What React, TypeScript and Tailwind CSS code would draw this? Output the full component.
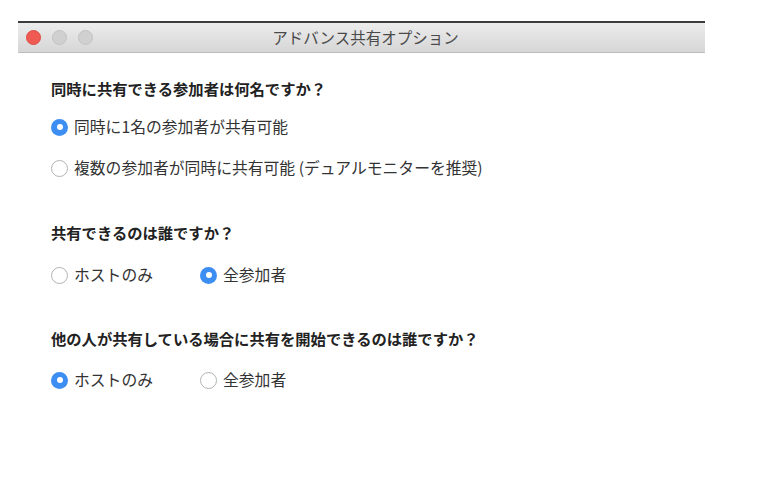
import React from "react";

const font = { fontFamily: '"Noto Sans CJK JP", "Noto Sans", sans-serif' };

function Radio({ checked }: { checked: boolean }) {
  return checked ? (
    <span className="flex h-[17px] w-[17px] shrink-0 items-center justify-center rounded-full bg-[#3d8ef2]">
      <span className="h-[6px] w-[6px] rounded-full bg-white" />
    </span>
  ) : (
    <span className="h-[17px] w-[17px] shrink-0 rounded-full border-[1.5px] border-[#b3b3b3] bg-white" />
  );
}

function Option({ checked, label, w }: { checked: boolean; label: string; w?: string }) {
  return (
    <div className={`flex h-5 items-center gap-[6px] ${w ?? ""}`}>
      <Radio checked={checked} />
      <span className="text-[15.8px] leading-5 text-[#333] whitespace-nowrap">{label}</span>
    </div>
  );
}

function Heading({ children }: { children: React.ReactNode }) {
  return <div className="h-5 text-[15.3px] font-bold leading-5 text-[#222] whitespace-nowrap">{children}</div>;
}

export default function App() {
  return (
    <div className="min-h-[492px] w-[770px] bg-white" style={font}>
      <div className="h-[21px]" />
      <div className="ml-[18px] w-[687px]">
        <div className="h-[2px] bg-[#3c3c3c]" />
        <div className="relative flex h-[30px] items-center border-b border-[#bdbdbd] bg-gradient-to-b from-[#ececec] to-[#d6d6d6] pl-[8px]">
          <div className="flex items-center gap-[11px]">
            <span className="h-[15px] w-[15px] rounded-full border border-[#dc4b43] bg-[#ef5a52]" />
            <span className="h-[15px] w-[15px] rounded-full border border-[#c2c2c2] bg-[#d0d0d0]" />
            <span className="h-[15px] w-[15px] rounded-full border border-[#c2c2c2] bg-[#d0d0d0]" />
          </div>
          <div className="absolute inset-0 flex items-center justify-center pl-[8px] text-[15.5px] text-[#4a4a4a]">
            アドバンス共有オプション
          </div>
        </div>
        <div className="flex flex-col pl-[33px]">
          <div className="mt-[25px]">
            <Heading>同時に共有できる参加者は何名ですか？</Heading>
          </div>
          <div className="mt-[19px]">
            <Option checked label="同時に1名の参加者が共有可能" />
          </div>
          <div className="mt-[21px]">
            <Option checked={false} label="複数の参加者が同時に共有可能 (デュアルモニターを推奨)" />
          </div>
          <div className="mt-[44px]">
            <Heading>共有できるのは誰ですか？</Heading>
          </div>
          <div className="mt-[23px] flex">
            <Option checked={false} label="ホストのみ" w="w-[149px]" />
            <Option checked label="全参加者" />
          </div>
          <div className="mt-[43px]">
            <Heading>他の人が共有している場合に共有を開始できるのは誰ですか？</Heading>
          </div>
          <div className="mt-[22px] flex">
            <Option checked label="ホストのみ" w="w-[149px]" />
            <Option checked={false} label="全参加者" />
          </div>
        </div>
      </div>
    </div>
  );
}
